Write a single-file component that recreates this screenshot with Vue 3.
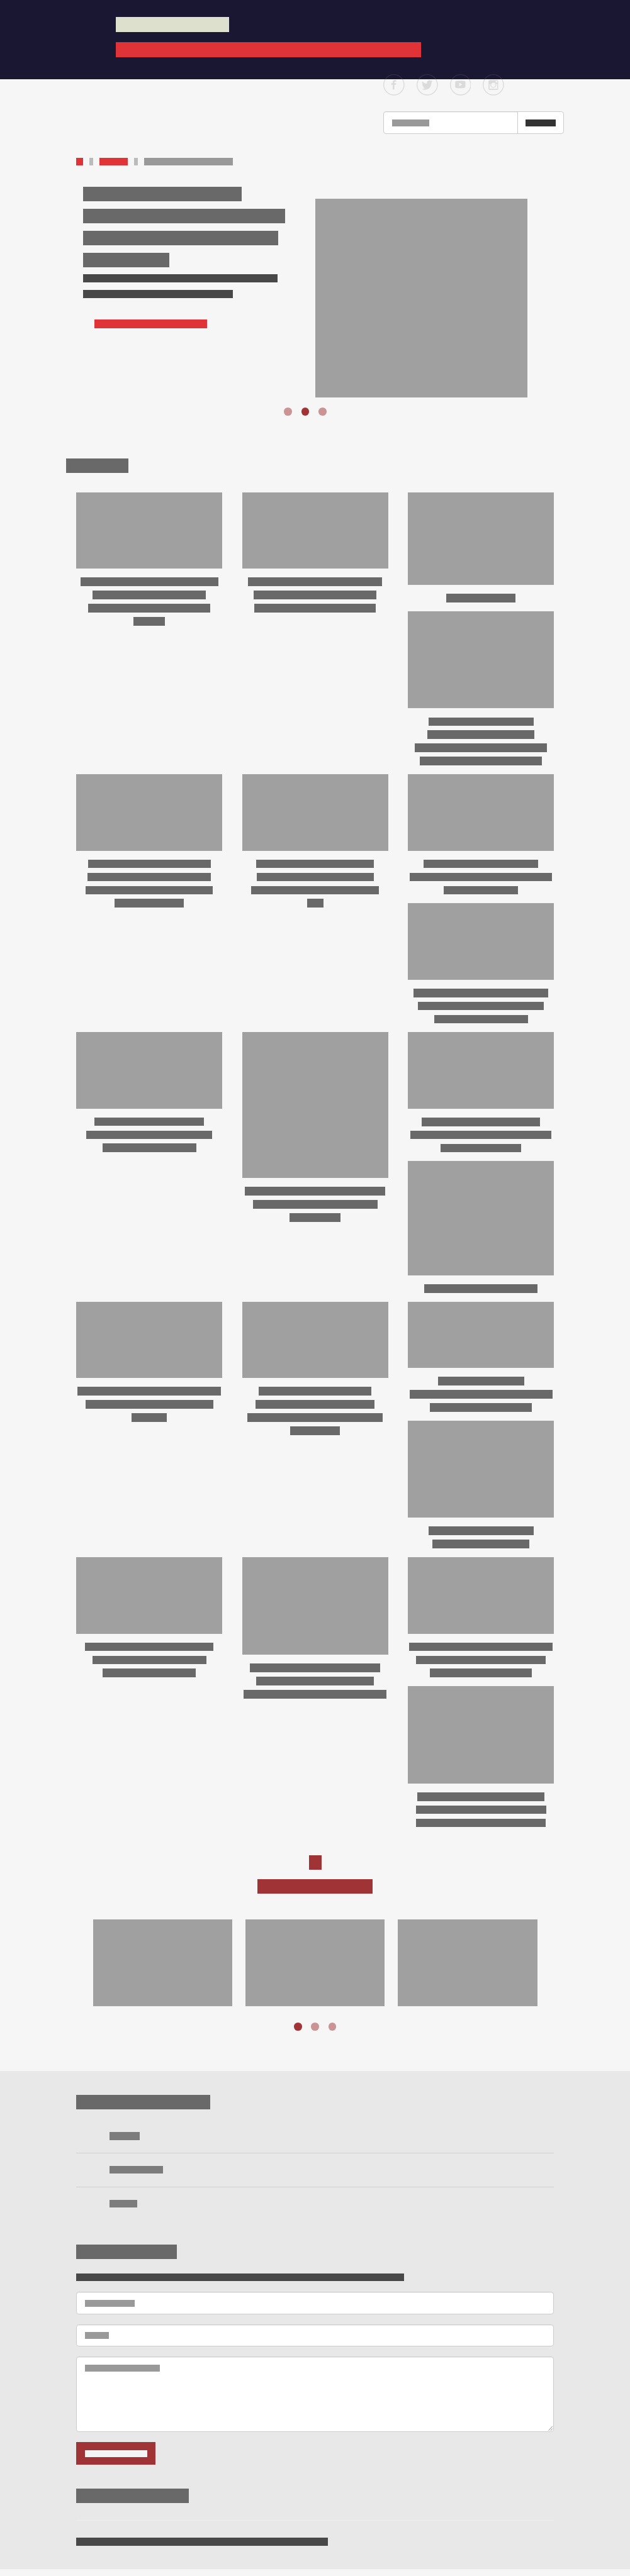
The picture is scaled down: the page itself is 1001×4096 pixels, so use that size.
<script setup>
const heroTitle = [478, 609, 589, 260]
const heroText = [587, 452]

// Each row holds three columns; a column stacks cards: image height + caption line widths.
const rows = [
  [
    [{ h: 230, lines: [416, 341, 367, 95] }],
    [{ h: 230, lines: [403, 370, 367] }],
    [{ h: 279, lines: [210] }, { h: 293.1, lines: [317, 324, 398, 368] }],
  ],
  [
    [{ h: 231, lines: [370, 373, 384, 210] }],
    [{ h: 231, lines: [354, 353, 385, 49] }],
    [{ h: 231, lines: [344, 430, 223] }, { h: 230.4, lines: [405, 380, 283] }],
  ],
  [
    [{ h: 230, lines: [331, 380, 283] }],
    [{ h: 440, lines: [422, 376, 153] }],
    [{ h: 230.4, lines: [356, 425, 242] }, { h: 344.6, lines: [342] }],
  ],
  [
    [{ h: 230, lines: [433, 385, 106] }],
    [{ h: 230, lines: [340, 360, 409, 149] }],
    [{ h: 200, lines: [260, 431, 307] }, { h: 293, lines: [317, 293] }],
  ],
  [
    [{ h: 230.4, lines: [388, 343, 282] }],
    [{ h: 294, lines: [393, 355, 430] }],
    [{ h: 230.6, lines: [432, 390, 308] }, { h: 293.2, lines: [384, 393, 391] }],
  ],
]

const links = [91, 162, 83]
const px = (n) => ({ width: n + 'px' })
</script>

<template>
  <div class="page">
    <header class="top">
      <div class="bar brand"></div>
      <div class="bar tagline"></div>
      <nav class="social">
        <svg viewBox="0 0 64 64">
          <circle cx="32" cy="32" r="30.7" />
          <path d="M28.5 46V32H24v-5h4.500v-3.500c0-4.500 2.800-6 6-6h4.300v4.700h-2.600c-2 0-2.700.8-2.700 2.500V27h5.300l-.6 5h-4.700v14z" />
        </svg>
        <svg viewBox="0 0 64 64">
          <circle cx="32" cy="32" r="30.700" />
          <path d="M48 20.500a13 13 0 0 1-3.300 3.700c.5 12-7.500 22.800-19.500 22.800-3.500 0-6.700-.8-9.200-2.500 3.500.2 6.500-.7 9-2.700-3-.2-5-2-6-4.600h2.800c-3-1-5.200-3.500-5.200-6.700l2.800.8c-3-2.300-3.600-5.800-1.900-9.300 3.600 4.300 8 6.700 13.700 7-1.200-6 2.300-11 7.500-11 2 0 3.500.8 4.800 2l4.200-1.600-2.500 3.600z" />
        </svg>
        <svg viewBox="0 0 64 64">
          <circle cx="32" cy="32" r="30.700" />
          <path fill-rule="evenodd" d="M20.500 20Q31 19 41.500 20q5 .3 5 5.500v11q0 5-5 5.300-10.500 1-21 0-5-.3-5-5.300v-11q0-5.200 5-5.500zM28 25.500v11l8.500-5.500z" />
        </svg>
        <svg viewBox="0 0 64 64">
          <circle cx="32" cy="32" r="30.700" />
          <path fill-rule="evenodd" d="M21 17.500h22q3.500 0 3.500 3.500v23q0 3.500-3.500 3.500H21q-3.500 0-3.500-3.500V21q0-3.500 3.500-3.500zM39 20v5h5v-5zM20.500 29.500V44H44V29.500h-3.500a9 9 0 1 1-17 0zM32 25.500a6.500 7 0 1 0 0 14 6.500 7 0 1 0 0-14z" />
        </svg>
      </nav>
    </header>

    <main>
      <form class="search" @submit.prevent>
        <div class="search-field"><div class="bar hint"></div></div>
        <div class="search-button"><div class="bar go"></div></div>
      </form>

      <nav class="crumbs">
        <div class="bar c1"></div>
        <div class="bar sep"></div>
        <div class="bar c2"></div>
        <div class="bar sep"></div>
        <div class="bar c3"></div>
      </nav>

      <section class="hero">
        <div class="hero-copy">
          <div class="hero-title">
            <div v-for="(w, i) in heroTitle" :key="i" class="bar" :style="px(w)"></div>
          </div>
          <div class="hero-text">
            <div v-for="(w, i) in heroText" :key="i" class="bar" :style="px(w)"></div>
          </div>
          <div class="bar hero-link"></div>
        </div>
        <div class="hero-image"></div>
      </section>
      <div class="dots hero-dots"><i></i><i class="on"></i><i></i></div>

      <div class="bar section-title"></div>

      <section class="grid">
        <div v-for="(row, r) in rows" :key="r" class="row">
          <div v-for="(col, c) in row" :key="c" class="col">
            <article v-for="(card, k) in col" :key="k">
              <div class="thumb" :style="{ height: card.h + 'px' }"></div>
              <div class="caption">
                <div v-for="(w, i) in card.lines" :key="i" class="line">
                  <div class="bar" :style="px(w)"></div>
                </div>
              </div>
            </article>
          </div>
        </div>
      </section>

      <section class="gallery">
        <div class="bar count"></div>
        <div class="bar gallery-title"></div>
        <div class="slides"><div></div><div></div><div></div></div>
        <div class="dots"><i class="on"></i><i></i><i></i></div>
      </section>
    </main>

    <footer>
      <div class="bar heading f1"></div>
      <ul>
        <li v-for="(w, i) in links" :key="i"><div class="bar" :style="px(w)"></div></li>
      </ul>
      <div class="bar heading f2"></div>
      <div class="bar copy intro"></div>
      <div class="field"><div class="bar name"></div></div>
      <div class="field"><div class="bar mail"></div></div>
      <div class="field area">
        <div class="bar message"></div>
        <svg class="grip" viewBox="0 0 14 16"><path d="M1 15 13 1.500M7.500 15 13 8.500" /></svg>
      </div>
      <div class="submit"><div class="bar"></div></div>
      <div class="bar heading f3"></div>
      <div class="rule"></div>
      <div class="bar copy legal"></div>
    </footer>
  </div>
</template>

<style>
html,
body {
  margin: 0;
  background: #f6f6f6;
  overflow: hidden;
}
</style>

<style scoped>
.page {
  zoom: 0.527;
  width: 1900px;
  height: 7772px;
  background: #f6f6f6;
  font-family: "Open Sans", sans-serif;
}
.page * {
  box-sizing: border-box;
}
.bar {
  background: #696969;
}

.top {
  position: relative;
  height: 240px;
  padding: 52px 0 0 350px;
  background: #1a1733;
}
.brand {
  width: 340px;
  height: 44px;
  background: #dce0cd;
}
.tagline {
  width: 919px;
  height: 44px;
  margin-top: 32px;
  background: #e03338;
}
.social {
  position: absolute;
  left: 1156px;
  top: 224px;
  display: flex;
  gap: 36px;
}
.social svg {
  width: 64px;
  height: 64px;
  opacity: 0.21;
}
.social circle {
  fill: none;
  stroke: #7a7a7a;
  stroke-width: 2.6;
}
.social path {
  fill: #7a7a7a;
}

.search {
  display: flex;
  width: 544px;
  height: 68px;
  margin: 96px 0 0 1156px;
  border: 2px solid #ccc;
  border-radius: 8px;
  background: #fff;
  overflow: hidden;
}
.search-field {
  width: 401px;
  padding: 22px 24px;
  box-shadow: inset 0 2px 2px rgba(0, 0, 0, 0.075);
}
.search-button {
  flex: 1;
  padding: 22px 0 0 24px;
  border-left: 2px solid #ccc;
}
.hint {
  width: 112px;
  height: 21px;
  background: #999;
}
.go {
  width: 90px;
  height: 21px;
  background: #333;
}

.crumbs {
  display: flex;
  height: 24px;
  margin: 72px 0 0 230px;
  gap: 19px;
}
.c1 {
  width: 20px;
  background: #e03338;
}
.c2 {
  width: 84px;
  background: #e03338;
}
.c3 {
  width: 267px;
  background: #999;
}
.sep {
  width: 12.500px;
  background: #bbb;
}

.hero {
  display: flex;
  height: 700px;
  padding: 64px 0 0 250px;
}
.hero-copy {
  width: 700px;
}
.hero-title {
  display: flex;
  flex-direction: column;
  gap: 22px;
}
.hero-title .bar {
  height: 44px;
}
.hero-text {
  display: flex;
  flex-direction: column;
  gap: 23.500px;
  margin-top: 22px;
}
.hero-text .bar {
  height: 24px;
  background: #484848;
}
.hero-link {
  width: 340px;
  height: 26px;
  margin: 65px 0 0 34px;
  background: #e03338;
}
.hero-image {
  width: 640px;
  height: 600px;
  margin-top: 36px;
  background: #a0a0a0;
}

.dots {
  display: flex;
  justify-content: center;
  gap: 28px;
}
.dots i {
  width: 24px;
  height: 24px;
  border-radius: 50%;
  background: #cb9494;
}
.dots .on {
  background: #a03336;
}
.hero-dots {
  margin: 30px 60px 0 0;
}

.section-title {
  width: 187px;
  height: 44px;
  margin: 130px 0 58px 200px;
}

.row {
  display: flex;
  gap: 60px;
  padding-left: 230px;
}
.col {
  width: 440px;
}
.thumb {
  background: #a0a0a0;
}
.caption {
  padding: 20px 0;
}
.line {
  display: flex;
  align-items: center;
  justify-content: center;
  height: 39.600px;
}
.line .bar {
  height: 26px;
}

.gallery {
  display: flex;
  flex-direction: column;
  align-items: center;
  height: 709px;
  padding-top: 57.500px;
}
.count {
  width: 38px;
  height: 45px;
  background: #a03336;
}
.gallery-title {
  width: 347px;
  height: 44px;
  margin-top: 27px;
  background: #a03336;
}
.slides {
  display: flex;
  gap: 40px;
  margin: 79px 0 50px;
}
.slides div {
  width: 420px;
  height: 261px;
  background: #a0a0a0;
}

footer {
  height: 1502px;
  padding: 72px 230px 0;
  background: #e8e8e8;
}
.heading {
  height: 44px;
}
.f1 {
  width: 404px;
}
.f2 {
  width: 303.500px;
  margin-top: 72px;
}
.f3 {
  width: 340px;
  margin-top: 72px;
}
.copy {
  height: 24px;
  background: #484848;
}
.intro {
  width: 988px;
  margin: 42px 0 32px;
}
.legal {
  width: 759px;
  margin-top: 52px;
}
ul {
  list-style: none;
  margin: 30px 0 0;
  padding: 0;
}
li {
  height: 102px;
  padding: 38px 0 0 100px;
  border-bottom: 2px solid #d0d0d0;
}
li:last-child {
  border-bottom: 0;
}
li .bar {
  height: 24px;
  background: #7c7c7c;
}
.field {
  position: relative;
  height: 68px;
  margin-bottom: 30px;
  padding: 22px 24px;
  border: 2px solid #ccc;
  border-radius: 8px;
  background: #fff;
  box-shadow: inset 0 2px 2px rgba(0, 0, 0, 0.075);
}
.field .bar {
  height: 21px;
  background: #999;
}
.name {
  width: 150px;
}
.mail {
  width: 72px;
}
.message {
  width: 227px;
}
.area {
  height: 228px;
}
.grip {
  position: absolute;
  right: 1px;
  bottom: 1px;
  width: 14px;
  height: 16px;
  fill: none;
  stroke: #555;
  stroke-width: 1.300;
}
.submit {
  width: 239px;
  height: 68px;
  padding: 24px 0 0 26px;
  background: #a03336;
}
.submit .bar {
  width: 188px;
  height: 21px;
  background: #f4f4f4;
}
.rule {
  height: 2px;
  margin-top: 50px;
  background: #eee;
}
</style>
